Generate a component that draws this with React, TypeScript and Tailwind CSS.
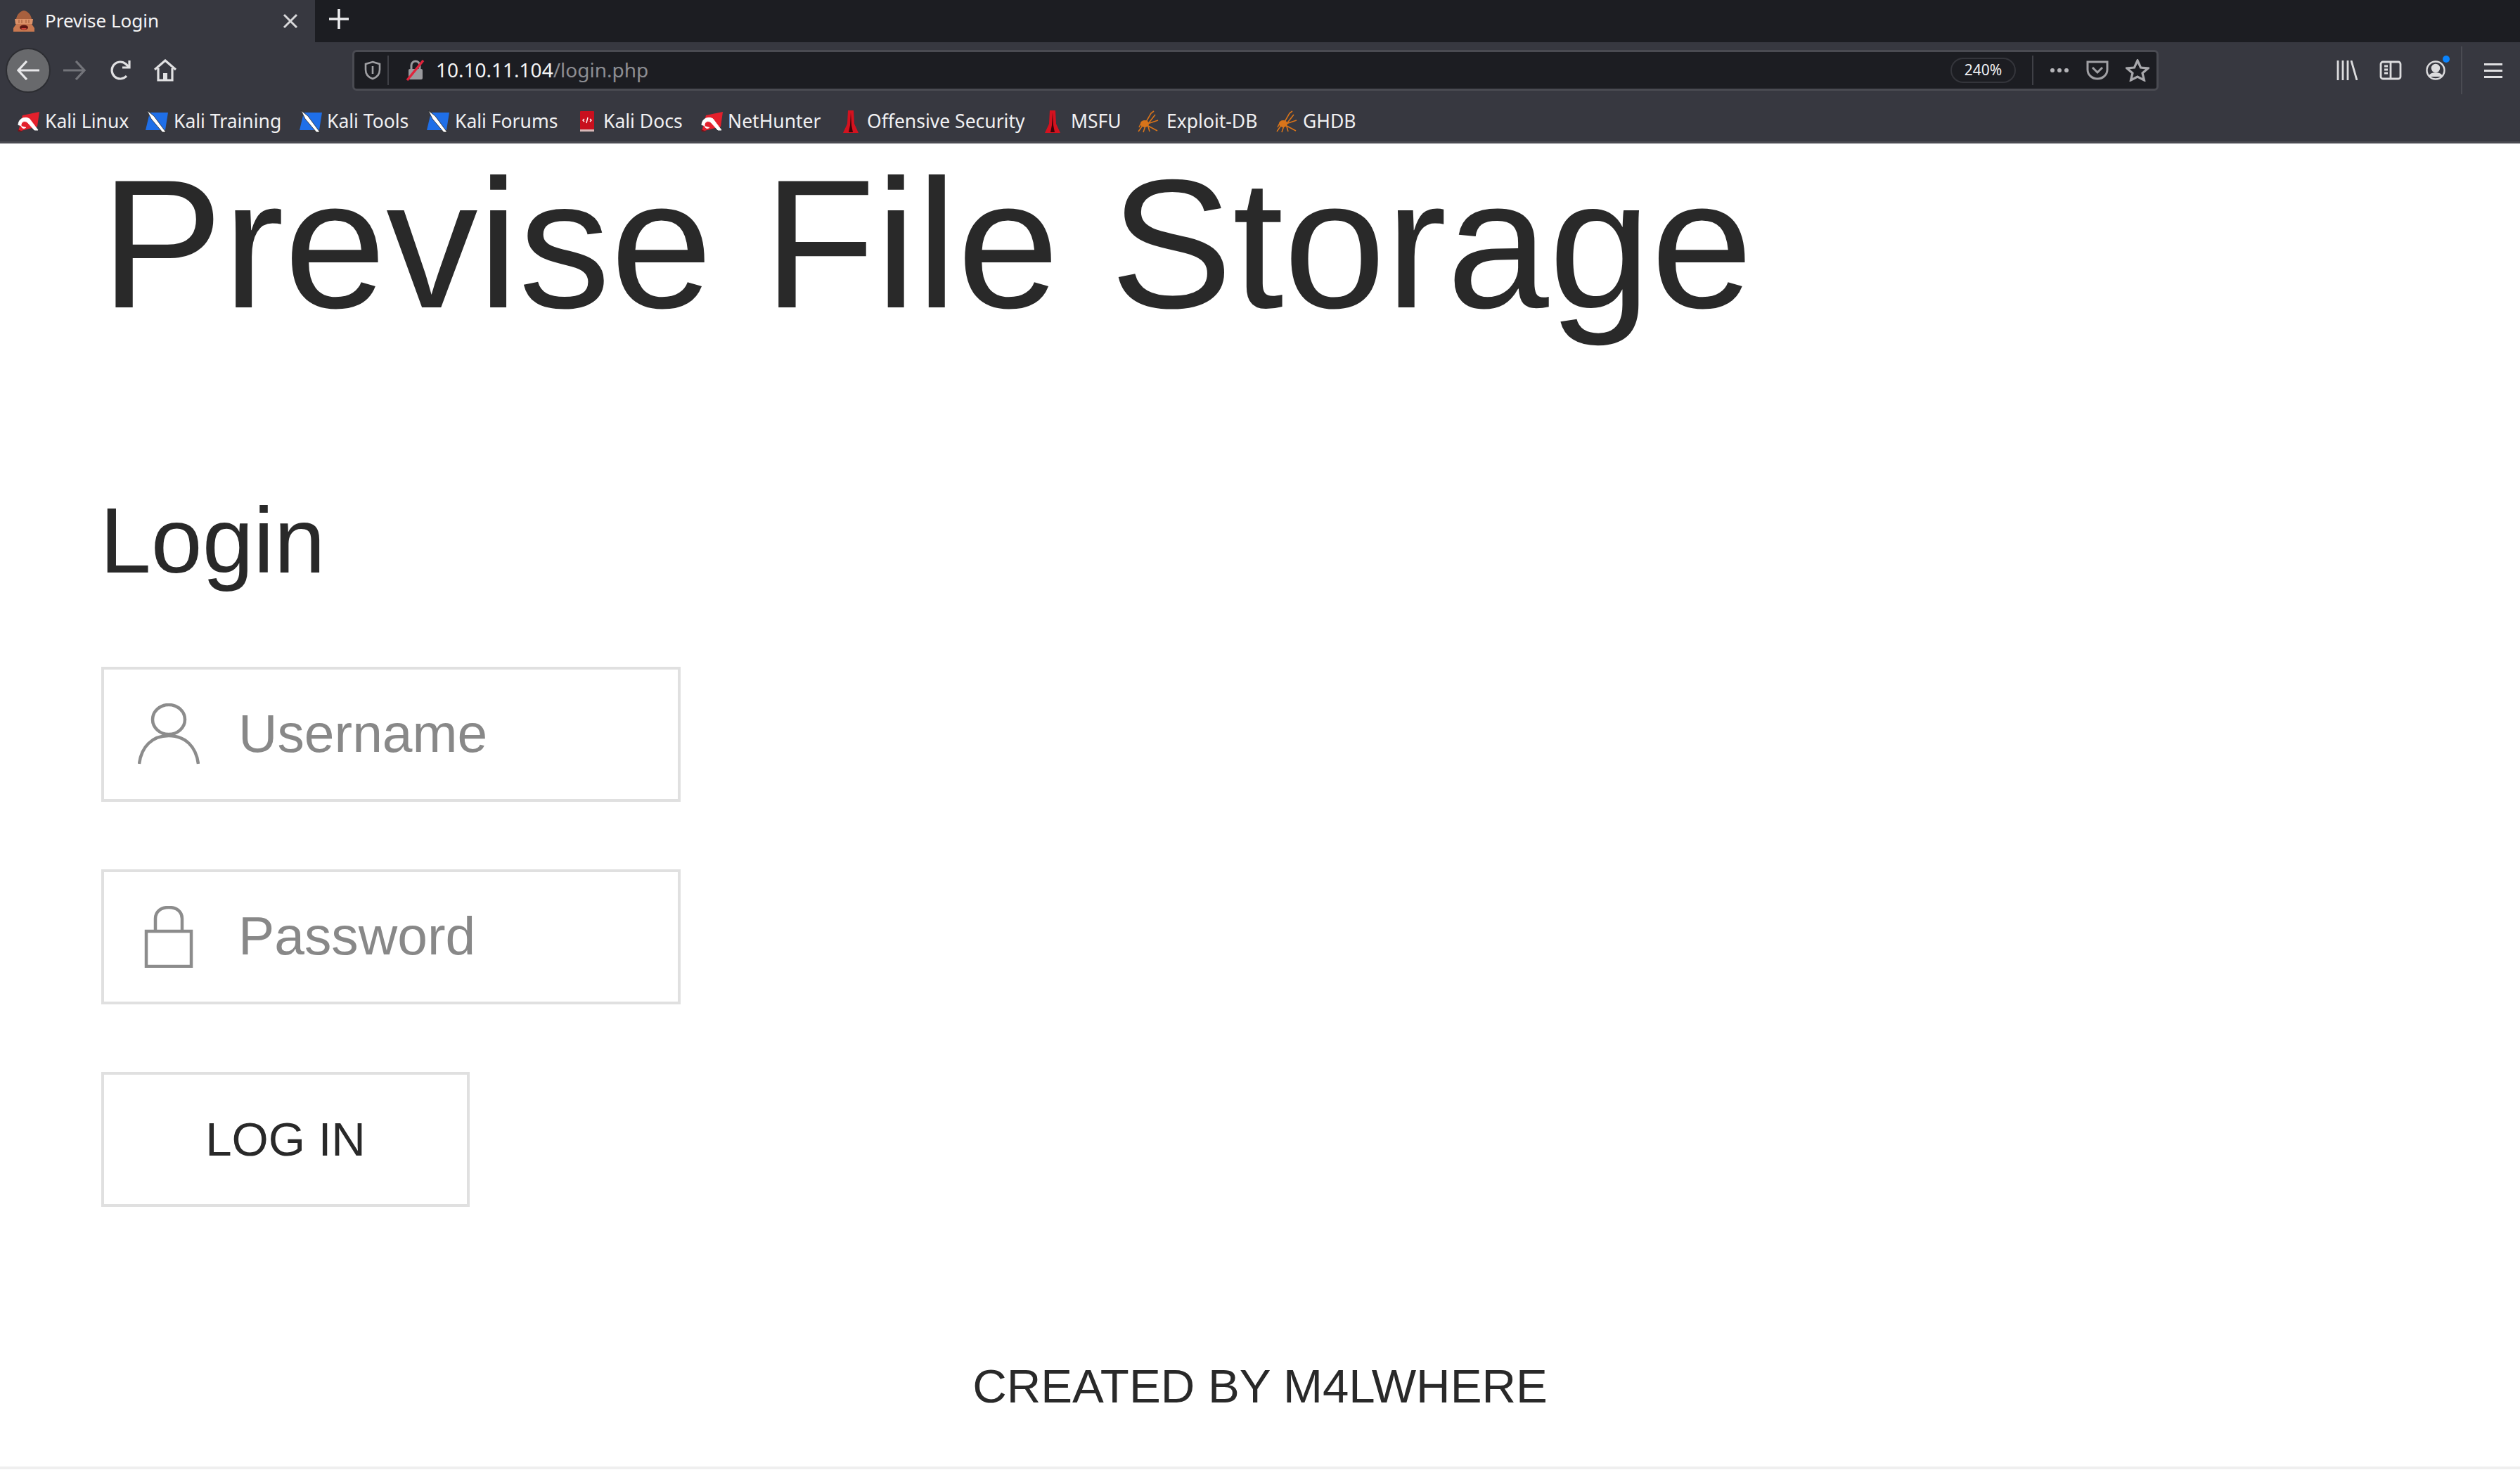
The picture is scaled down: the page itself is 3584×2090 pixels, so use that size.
const uiFont = "font-['Noto_Sans',sans-serif]";

const KaliIcon = () => (
  <svg viewBox="0 0 32 30" className="h-[30px] w-[32px] shrink-0">
    <path d="M8 6 L32 1 L29 22 L2 29 Z" fill="#e3202c" />
    <path d="M2 20 C2 10 12 7 18 11 L30 27 L25 27 L15 16 C11 13 6 15 6 20 C6 24 10 26 13 23" fill="#fff" stroke="#fff" strokeWidth="1" />
    <path d="M1 26 L9 29 L2 29 Z" fill="#7a1016" />
  </svg>
);

const TrainingIcon = () => (
  <svg viewBox="0 0 32 32" className="h-[32px] w-[32px] shrink-0">
    <path d="M6 3 H32 L28 28 H0 Z" fill="#1f6fe8" />
    <path d="M2 0 L12 8 L29 31 L24 31 L8 12 Z" fill="#fff" stroke="#222" strokeWidth="0.8" />
  </svg>
);

const DocsIcon = () => (
  <svg viewBox="0 0 24 32" className="h-[32px] w-[24px] shrink-0">
    <rect x="2" y="1" width="20" height="26" rx="1" fill="#c8101e" />
    <rect x="2" y="27" width="20" height="3" fill="#d8b8b8" />
    <path d="M8 12 L6 14 L8 16 M16 12 L18 14 L16 16 M13 10 L11 18" fill="none" stroke="#fff" strokeWidth="1.4" />
  </svg>
);

const OffsecIcon = () => (
  <svg viewBox="0 0 24 34" className="h-[34px] w-[24px] shrink-0">
    <path d="M8 1 H16 L17 20 L23 33 H1 L7 20 Z" fill="#d4121f" />
    <path d="M12 4 L13 22 L15 32 H9 L11 22 Z" fill="#3a0509" />
  </svg>
);

const SpiderIcon = () => (
  <svg viewBox="0 0 32 32" className="h-[32px] w-[32px] shrink-0" fill="none" stroke="#d8741a" strokeWidth="1.6">
    <path d="M12 18 L20 4 L24 1 M15 20 L26 6 M15 19 L30 14 M16 22 L29 29 M12 22 L9 31 M9 20 L2 30 M14 16 L18 30 M7 16 L3 24" />
    <ellipse cx="11" cy="19" rx="6" ry="5" fill="#d8741a" stroke="none" />
  </svg>
);

const bookmarks = [
  { label: "Kali Linux", icon: <KaliIcon />, cls: "w-[183px] gap-[8px]" },
  { label: "Kali Training", icon: <TrainingIcon />, cls: "w-[219px] gap-[8px]" },
  { label: "Kali Tools", icon: <TrainingIcon />, cls: "w-[181px] gap-[7px]" },
  { label: "Kali Forums", icon: <TrainingIcon />, cls: "w-[216px] gap-[8px]" },
  { label: "Kali Docs", icon: <DocsIcon />, cls: "w-[173px] gap-[11px]" },
  { label: "NetHunter", icon: <KaliIcon />, cls: "w-[202px] gap-[7px]" },
  { label: "Offensive Security", icon: <OffsecIcon />, cls: "w-[287px] gap-[11px]" },
  { label: "MSFU", icon: <OffsecIcon />, cls: "w-[132px] gap-[14px]" },
  { label: "Exploit-DB", icon: <SpiderIcon />, cls: "w-[197px] gap-[10px]" },
  { label: "GHDB", icon: <SpiderIcon />, cls: "w-[120px] gap-[7px]" },
];

const TabBar = () => (
  <div className="flex h-[60px] bg-[#1c1d22]">
    <div className="flex w-[448px] items-center bg-[#373840] pl-[18px] pr-[23px]">
      {/* favicon: monkey covering its eyes */}
      <svg viewBox="0 0 32 32" className="h-[32px] w-[32px]">
        <path d="M16 1 C22 2 26 7 27 13 H5 C6 7 10 2 16 1 Z" fill="#a8603e" />
        <path d="M3 13 H29 L28 20 H4 Z" fill="#dc9168" />
        <path d="M9 14 V19 M13 14 V19 M19 14 V19 M23 14 V19" stroke="#a8603e" strokeWidth="1.2" />
        <path d="M5 20 H27 L31 26 V31 H1 V26 Z" fill="#c97850" />
        <ellipse cx="16" cy="25" rx="6" ry="3.5" fill="#5e1612" />
        <path d="M12 26 H20 L18 28 H14 Z" fill="#d0453c" />
      </svg>
      <span className="ml-[14px] -mt-[2px] text-[26px] text-[#f5f5f6]">Previse Login</span>
      <svg viewBox="0 0 24 24" className="ml-auto h-[24px] w-[24px]" stroke="#d8d8da" strokeWidth="3">
        <path d="M3 3 L21 21 M21 3 L3 21" />
      </svg>
    </div>
    <div className="flex w-[68px] items-center justify-center pb-[6px]">
      <svg viewBox="0 0 28 28" className="h-[28px] w-[28px]" stroke="#ececee" strokeWidth="3.6">
        <path d="M14 0 V28 M0 14 H28" />
      </svg>
    </div>
  </div>
);

const NavBar = () => (
  <div className="flex h-[80px] items-center bg-[#373840]">
    <div className="ml-[8px] flex h-[64px] w-[64px] items-center justify-center rounded-full border-2 border-[#2c2d32] bg-[#68696c]">
      <svg viewBox="0 0 32 28" className="h-[28px] w-[32px]" fill="none" stroke="#e8e8ea" strokeWidth="3.2">
        <path d="M32 14 H2 M14 1 L2 14 L14 27" />
      </svg>
    </div>
    <svg viewBox="0 0 32 28" className="ml-[18px] h-[28px] w-[32px]" fill="none" stroke="#73747a" strokeWidth="3.2">
      <path d="M0 14 H30 M18 1 L30 14 L18 27" />
    </svg>
    <svg viewBox="0 0 30 30" className="ml-[34px] h-[30px] w-[30px]" fill="none" stroke="#e0e0e2" strokeWidth="3.2">
      <path d="M24 23 A12 12 0 1 1 23 6 L27 10" />
      <path d="M28 1 V11 H18" />
    </svg>
    <svg viewBox="0 0 32 32" className="ml-[33px] h-[32px] w-[32px]" fill="none" stroke="#e0e0e2" strokeWidth="3.2">
      <path d="M1 15 L16 2 L31 15" />
      <path d="M6 13 V30 H26 V13" />
      <rect x="13" y="20" width="6" height="10" fill="#e0e0e2" stroke="none" />
    </svg>

    <div className="ml-[250px] flex h-[58px] w-[2569px] items-center rounded-[6px] border-[3px] border-[#4a4b52] bg-[#1c1d22] pr-[10px]">
      <svg viewBox="0 0 24 28" className="ml-[14px] h-[28px] w-[24px]" fill="none" stroke="#a0a0a4" strokeWidth="2.6">
        <path d="M12 2 L22 5 V13 C22 20 18 24 12 26 C6 24 2 20 2 13 V5 Z" />
        <path d="M12 8 V19" />
      </svg>
      <div className="ml-[9px] h-[42px] w-[2px] bg-[#3f4046]" />
      <svg viewBox="0 0 28 30" className="ml-[24px] h-[30px] w-[28px]">
        <rect x="4" y="13" width="20" height="15" rx="2" fill="#9a9a9e" />
        <path d="M8 13 V8 A6 6 0 0 1 20 8 V13" fill="none" stroke="#9a9a9e" strokeWidth="3" />
        <path d="M2 29 L25 1" stroke="#e0243c" strokeWidth="3.4" />
      </svg>
      <span className="ml-[15px] -mt-[2px] text-[28px] text-[#f5f5f6]">
        10.10.11.104<span className="text-[#8c8d92]">/login.php</span>
      </span>
      <div className="ml-auto flex h-[36px] w-[93px] items-center justify-center rounded-full border-2 border-[#34353b] text-[21px] text-[#f0f0f2]">
        240%
      </div>
      <div className="ml-[23px] h-[42px] w-[2px] bg-[#3f4046]" />
      <div className="ml-[24px] flex gap-[4px]">
        <div className="h-[6px] w-[6px] rounded-full bg-[#b4b4b8]" />
        <div className="h-[6px] w-[6px] rounded-full bg-[#b4b4b8]" />
        <div className="h-[6px] w-[6px] rounded-full bg-[#b4b4b8]" />
      </div>
      <svg viewBox="0 0 32 28" className="ml-[25px] h-[28px] w-[32px]" fill="none" stroke="#a0a0a4" strokeWidth="3">
        <path d="M2 2 H30 V13 C30 21 23 26 16 26 C9 26 2 21 2 13 Z" />
        <path d="M9 10 L16 17 L23 10" />
      </svg>
      <svg viewBox="0 0 34 32" className="ml-[24px] h-[32px] w-[34px]" fill="none" stroke="#a8a8ac" strokeWidth="3.2">
        <path d="M17 2 L21.5 12 L32 13 L24 20 L26.5 30 L17 25 L7.5 30 L10 20 L2 13 L12.5 12 Z" />
      </svg>
    </div>

    <svg viewBox="0 0 32 28" className="ml-[252px] h-[28px] w-[32px]" fill="none" stroke="#dcdcde" strokeWidth="2.8">
      <path d="M3 0 V28 M10 0 V28 M17 0 V28 M22 0 L30 28" />
    </svg>
    <svg viewBox="0 0 32 28" className="ml-[30px] h-[28px] w-[32px]" fill="none" stroke="#dcdcde" strokeWidth="2.8">
      <rect x="2" y="2" width="28" height="24" rx="3" />
      <path d="M16 2 V26 M7 8 H12 M7 13 H12 M7 18 H12" />
    </svg>
    <div className="relative ml-[34px] h-[28px] w-[28px]">
      <svg viewBox="0 0 28 28" className="h-[28px] w-[28px]" fill="none" stroke="#dcdcde" strokeWidth="2.4">
        <circle cx="14" cy="14" r="12.5" />
        <circle cx="14" cy="11" r="5" fill="#dcdcde" />
        <path d="M5 23 C7 17 21 17 23 23" fill="#dcdcde" />
      </svg>
      <div className="absolute right-[-6px] top-[-7px] h-[10px] w-[10px] rounded-full bg-[#0a84ff]" />
    </div>
    <div className="ml-[22px] h-[68px] w-[2px] bg-[#4a4b52]" />
    <div className="ml-[31px] flex w-[26px] flex-col gap-[6px]">
      <div className="h-[3px] bg-[#e0e0e2]" />
      <div className="h-[3px] bg-[#e0e0e2]" />
      <div className="h-[3px] bg-[#e0e0e2]" />
    </div>
  </div>
);

const BookmarksBar = () => (
  <div className="flex h-[64px] items-center border-b-[3px] border-[#4a4b52] bg-[#373840] pl-[24px] pt-[5px]">
    {bookmarks.map((b) => (
      <div key={b.label} className={`flex items-center text-[26.5px] text-[#f0f0f2] ${b.cls}`}>
        {b.icon}
        <span>{b.label}</span>
      </div>
    ))}
  </div>
);

const App = () => {
  return (
    <div className="flex h-[2090px] flex-col overflow-hidden bg-white">
      <div className={uiFont}>
        <TabBar />
        <NavBar />
        <BookmarksBar />
      </div>

      <div className="flex flex-1 flex-col font-['Liberation_Sans',sans-serif] text-[#292929]">
        <div className="pl-[143px] pt-[12px]">
          <h1 className="text-[261px] leading-none">Previse File Storage</h1>
        </div>
        <div className="pl-[144px]">
          <h2 className="-ml-[2px] mt-[226px] text-[131px] leading-none">Login</h2>

          <div className="mt-[114px] flex h-[192px] w-[824px] items-center border-[4px] border-[#e0e0e0]">
            <svg viewBox="0 0 88 88" className="ml-[48px] h-[88px] w-[88px]" fill="none" stroke="#8c8c8c" strokeWidth="4.5">
              <ellipse cx="44" cy="23" rx="23" ry="21" />
              <path d="M2 86 C5 62 20 46 44 46 C68 46 83 62 86 86" />
            </svg>
            <input
              placeholder="Username"
              className="mb-[3px] ml-[55px] w-[600px] bg-transparent text-[76.8px] outline-none placeholder:text-[#888888]"
            />
          </div>

          <div className="mt-[96px] flex h-[192px] w-[824px] items-center border-[4px] border-[#e0e0e0]">
            <svg viewBox="0 0 70 88" className="ml-[57px] h-[88px] w-[70px]" fill="none" stroke="#8c8c8c" strokeWidth="4.5">
              <rect x="3" y="36" width="64" height="50" />
              <path d="M16 36 V18 C16 8 24 2 35 2 C46 2 54 8 54 18 V36" />
            </svg>
            <input
              placeholder="Password"
              className="mb-[3px] ml-[64px] w-[600px] bg-transparent text-[76.8px] outline-none placeholder:text-[#888888]"
            />
          </div>

          <button className="mt-[96px] flex h-[192px] w-[524px] items-center justify-center border-[4px] border-[#e0e0e0] text-[67.2px]">
            LOG IN
          </button>
        </div>

        <div className="mt-[221px] text-center text-[67.2px] leading-none">CREATED BY M4LWHERE</div>
      </div>
      <div className="h-[4px] bg-[#efefef]" />
      <div className="h-[1px] bg-white" />
    </div>
  );
};

export default App;
